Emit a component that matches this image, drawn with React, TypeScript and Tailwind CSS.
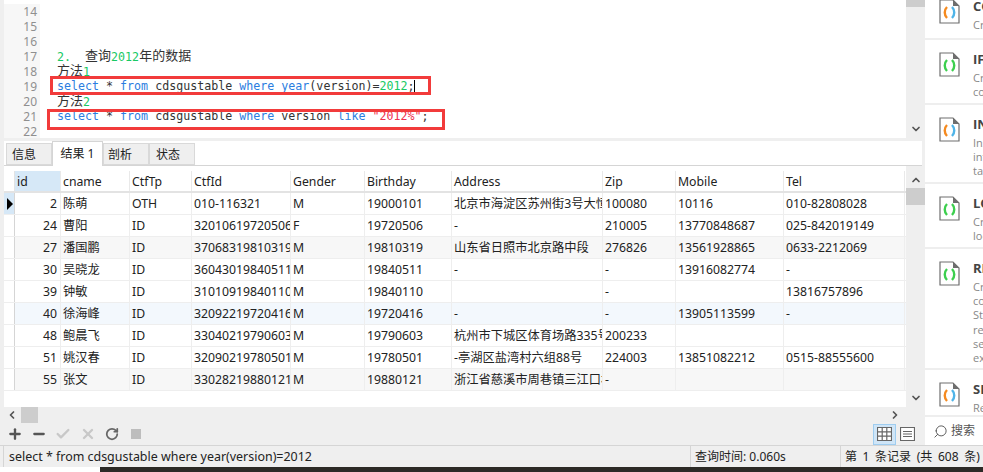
import { Plus, Minus, Check, X, RotateCw, Search, ChevronUp, ChevronDown, ChevronLeft, ChevronRight } from 'lucide-react';

const columns = ['id', 'cname', 'CtfTp', 'CtfId', 'Gender', 'Birthday', 'Address', 'Zip', 'Mobile', 'Tel'];

const rows = [
  ['2', '陈萌', 'OTH', '010-116321', 'M', '19000101', '北京市海淀区苏州街3号大恒科技大厦', '100080', '10116', '010-82808028'],
  ['24', '曹阳', 'ID', '320106197205060', 'F', '19720506', '-', '210005', '13770848687', '025-842019149'],
  ['27', '潘国鹏', 'ID', '370683198103190', 'M', '19810319', '山东省日照市北京路中段', '276826', '13561928865', '0633-2212069'],
  ['30', '吴晓龙', 'ID', '360430198405110', 'M', '19840511', '-', '-', '13916082774', '-'],
  ['39', '钟敏', 'ID', '310109198401100', 'M', '19840110', '', '-', '', '13816757896'],
  ['40', '徐海峰', 'ID', '320922197204160', 'M', '19720416', '-', '-', '13905113599', '-'],
  ['48', '鲍晨飞', 'ID', '330402197906030', 'M', '19790603', '杭州市下城区体育场路335号', '200233', '', ''],
  ['51', '姚汉春', 'ID', '320902197805010', 'M', '19780501', '-亭湖区盐湾村六组88号', '224003', '13851082212', '0515-88555600'],
  ['55', '张文', 'ID', '330282198801210', 'M', '19880121', '浙江省慈溪市周巷镇三江口村', '-', '', ''],
];

const sideItems = [
  { title: 'COALESCE', color: true, lines: ['Create a list'], h: 'h-[40px]' },
  { title: 'IF', color: false, lines: ['Create a', 'condition'], h: 'h-[65px]' },
  { title: 'INSERT', color: true, lines: ['Insert rows', 'into a', 'table'], h: 'h-[79px]' },
  { title: 'LOOP', color: false, lines: ['Create a', 'loop'], h: 'h-[65px]' },
  { title: 'REPEAT', color: false, lines: ['Create a', 'condition', 'Statement', 'repeat', 'search', 'execute'], h: 'h-[121px]' },
  { title: 'SLEEP', color: true, lines: ['Return'], h: 'h-[47px]' },
];

const gridCols = 'grid grid-cols-[11px_46px_69px_62px_99px_74px_87px_151px_73px_108px_121px]';

function FileIcon({ color }: { color: boolean }) {
  return (
    <svg width="21" height="25" viewBox="0 0 21 25" className="shrink-0">
      <path d="M1 1H14L20 7V24H1Z" fill="#fff" stroke="#6e6e6e" strokeWidth="1.2" />
      <path d="M14 1L20 7H14Z" fill="#6e6e6e" />
      <path d="M8 8C5 11 5 16 8 19" fill="none" stroke={color ? '#f58a1f' : '#3ccf4e'} strokeWidth="2.4" />
      <path d="M13 8C16 11 16 16 13 19" fill="none" stroke={color ? '#4fb4e8' : '#3ccf4e'} strokeWidth="2.4" />
    </svg>
  );
}

function Kw({ children }: { children: React.ReactNode }) {
  return <span className="text-[#2b7de0]">{children}</span>;
}

function Num({ children }: { children: React.ReactNode }) {
  return <span className="text-[#18c964]">{children}</span>;
}

function Cjk({ children }: { children: React.ReactNode }) {
  return <span className="align-[1px] text-[13px] leading-[15px]">{children}</span>;
}

function Line({ n, children }: { n: number; children?: React.ReactNode }) {
  return (
    <div className="flex h-[15px] items-center">
      <div className="h-full w-[36px] shrink-0 bg-[#f7f7f7] pr-[3px] text-right font-['Noto_Sans',sans-serif] text-[12px] leading-[15px] text-[#8f8f8f]">{n}</div>
      <div className="whitespace-pre pl-[17px] leading-[15px] text-[#333]">{children}</div>
    </div>
  );
}

export default function App() {
  return (
    <div className="flex h-[472px] w-[983px] flex-col overflow-hidden bg-white font-['Noto_Sans','Noto_Sans_CJK_SC',sans-serif] text-[12px] text-[#222]">
      <div className="flex h-[445px]">
        {/* main column */}
        <div className="flex w-[925px] flex-col bg-[#efefef] pl-[4px]">
          {/* editor */}
          <div className="flex h-[138px]">
            <div className="relative w-[902px] overflow-hidden bg-white pt-[4px] font-['DejaVu_Sans_Mono','Noto_Sans_CJK_SC',monospace] text-[11.65px]">
              <Line n={14} />
              <Line n={15} />
              <Line n={16} />
              <Line n={17}><Num>2.</Num>  <Cjk>查询</Cjk><Num>2012</Num><Cjk>年的数据</Cjk></Line>
              <Line n={18}><Cjk>方法</Cjk><Num>1</Num></Line>
              <Line n={19}>
                <Kw>select</Kw> * <Kw>from</Kw> cdsgustable <Kw>where</Kw> <Kw>year</Kw>(version)=<Num>2012</Num>;
                <span className="ml-[-1px] inline-block h-[14px] w-px bg-black align-middle" />
              </Line>
              <Line n={20}><Cjk>方法</Cjk><Num>2</Num></Line>
              <Line n={21}><Kw>select</Kw> * <Kw>from</Kw> cdsgustable <Kw>where</Kw> version <Kw>like</Kw> <span className="text-[#f0304f]">"2012%"</span>;</Line>
              <Line n={22} />
              {/* red annotation boxes */}
              <div className="absolute left-[46px] top-[76px] h-[19px] w-[381px] border-[3px] border-[#f23b3b]" />
              <div className="absolute left-[43px] top-[109px] h-[21px] w-[398px] border-[3px] border-[#f23b3b]" />
            </div>
            <div className="flex w-[19px] flex-col items-center justify-between">
              <div className="h-[7px] w-full bg-[#cdcdcd]" />
              <ChevronDown size={12} strokeWidth={3.5} className="mb-[3px] text-[#555]" />
            </div>
          </div>

          {/* tabs */}
          <div className="mt-[3px] flex h-[25px] w-[918px] items-end border-b border-[#d5d5d5] bg-white pl-[2px]">
            <div className="flex h-[22px] w-[46px] items-center border border-[#d9d9d9] bg-[#efefef] pl-[5px] leading-[23px]">信息</div>
            <div className="-mb-px flex h-[25px] w-[51px] items-center justify-center border border-b-0 border-[#d5d5d5] bg-white pb-[1px]">结果 1</div>
            <div className="flex h-[22px] w-[46px] items-center border border-[#d9d9d9] bg-[#efefef] pl-[4px] leading-[23px]">剖析</div>
            <div className="flex h-[22px] w-[46px] items-center border border-[#d9d9d9] bg-[#efefef] pl-[6px] leading-[23px]">状态</div>
          </div>

          {/* result grid */}
          <div className="flex h-[241px]">
            <div className="w-[902px] bg-white pt-[5px] text-[12.25px]">
              <div className={`${gridCols} h-[22px] border-b-2 border-[#e3e3e3]`}>
                <div className="border-r border-[#e3e3e3]" />
                {columns.map((c, i) => (
                  <div key={c} className={`overflow-hidden whitespace-nowrap border-r border-[#e9e9e9] pl-[2px] leading-[22px] ${i === 0 ? 'bg-[#d6e8f7]' : ''}`}>{c}</div>
                ))}
              </div>
              {rows.map((r, ri) => (
                <div
                  key={r[0]}
                  className={`${gridCols} h-[22px] border-b border-[#eeeeee] ${ri === 2 || ri === 8 ? 'bg-[#f7f7f7]' : ri === 5 ? 'bg-[#f3f8fd]' : 'bg-white'}`}
                >
                  <div className={`flex items-center border-r border-[#d5d5d5] ${ri === 0 ? 'bg-[#d6e8f7]' : 'bg-white'}`}>
                    {ri === 0 && <div className="ml-[3px] h-0 w-0 border-y-[6px] border-l-[6px] border-y-transparent border-l-black" />}
                  </div>
                  {r.map((v, ci) => (
                    <div
                      key={ci}
                      className={`overflow-hidden whitespace-nowrap border-r border-[#eeeeee] leading-[21px] ${ci === 0 ? 'pr-[3px] text-right' : 'pl-[2px]'}`}
                    >
                      {v}
                    </div>
                  ))}
                </div>
              ))}
            </div>
            <div className="flex w-[19px] flex-col items-center pt-[5px]">
              <ChevronUp size={12} strokeWidth={3.5} className="mt-[3px] text-[#555]" />
              <div className="mt-[2px] h-[17px] w-full bg-[#cdcdcd]" />
              <ChevronDown size={12} strokeWidth={3.5} className="mt-auto mb-[3px] text-[#555]" />
            </div>
          </div>

          {/* horizontal scrollbar */}
          <div className="flex h-[16px] items-center pr-[22px]">
            <ChevronLeft size={12} strokeWidth={3.5} className="ml-[2px] text-[#555]" />
            <div className="ml-[3px] h-full w-[17px] bg-[#cdcdcd]" />
            <ChevronRight size={12} strokeWidth={3.5} className="ml-auto mr-[2px] text-[#555]" />
          </div>

          {/* toolbar */}
          <div className="flex h-[22px] items-center pr-[10px] text-[#555]">
            <Plus size={16} strokeWidth={3.5} className="ml-[3px]" />
            <Minus size={16} strokeWidth={3.5} className="ml-[8px]" />
            <Check size={16} strokeWidth={3.5} className="ml-[8px] text-[#c8c8c8]" />
            <X size={16} strokeWidth={3.5} className="ml-[9px] text-[#c8c8c8]" />
            <RotateCw size={14} strokeWidth={3} className="ml-[9px] text-[#666]" />
            <div className="ml-[12px] h-[10px] w-[10px] bg-[#bdbdbd]" />
            <div className="ml-auto flex h-[21px] w-[23px] items-center justify-center border border-[#9fcdf0] bg-[#cfe5f7]">
              <svg width="15" height="14" viewBox="0 0 15 14">
                <path d="M.5.5h14v13H.5zM.5 4.8h14M.5 9.2h14M5.2.5v13M9.8.5v13" fill="#fff" stroke="#666" strokeWidth="1.2" />
              </svg>
            </div>
            <div className="ml-[4px] flex h-[21px] w-[15px] items-center justify-center">
              <svg width="15" height="14" viewBox="0 0 15 14">
                <path d="M.5.5h14v13H.5zM3 4.5h9M3 7h9M3 9.5h9" fill="#fff" stroke="#666" strokeWidth="1.2" />
              </svg>
            </div>
          </div>
        </div>

        {/* sidebar */}
        <div className="flex w-[58px] flex-col overflow-hidden bg-white">
          {sideItems.map((s) => (
            <div key={s.title} className={`flex ${s.h} gap-[13px] border-b-2 border-[#eeeeee] pl-[14px] pt-[12px] first:-mt-[13px] first:h-[53px]`}>
              <FileIcon color={s.color} />
              <div className="whitespace-nowrap font-['Open_Sans','Noto_Sans',sans-serif] text-[11px] leading-[14.2px] text-[#888]">
                <div className="mb-[5px] text-[13px] font-bold leading-[14px] text-[#444]">{s.title}</div>
                {s.lines.map((l) => (
                  <div key={l}>{l}</div>
                ))}
              </div>
            </div>
          ))}
          <div className="flex flex-1 items-center gap-[3px] pl-[8px] text-[#555]">
            <Search size={15} strokeWidth={1.5} className="-scale-x-100" />
            <span>搜索</span>
          </div>
        </div>
      </div>

      {/* status bar */}
      <div className="flex h-[22px] items-center border-t border-[#d5d5d5] bg-[#efefef] pl-[3px]">
        <div className="h-full w-[687px] whitespace-nowrap border-l border-[#d5d5d5] pl-[5px] text-[12.45px] leading-[21px]">select * from cdsgustable where year(version)=2012</div>
        <div className="h-full w-[150px] border-l border-[#d5d5d5] pl-[4px] leading-[21px]">查询时间: 0.060s</div>
        <div className="h-full flex-1 whitespace-nowrap border-l border-[#d5d5d5] pl-[4px] leading-[21px] [word-spacing:2.5px]">第 1 条记录 (共 608 条)</div>
      </div>

      {/* desktop behind the window */}
      <div className="flex h-[5px]">
        <div className="w-[100px] bg-white" />
        <div className="flex-1 bg-[#2c2a26]" />
      </div>
    </div>
  );
}
